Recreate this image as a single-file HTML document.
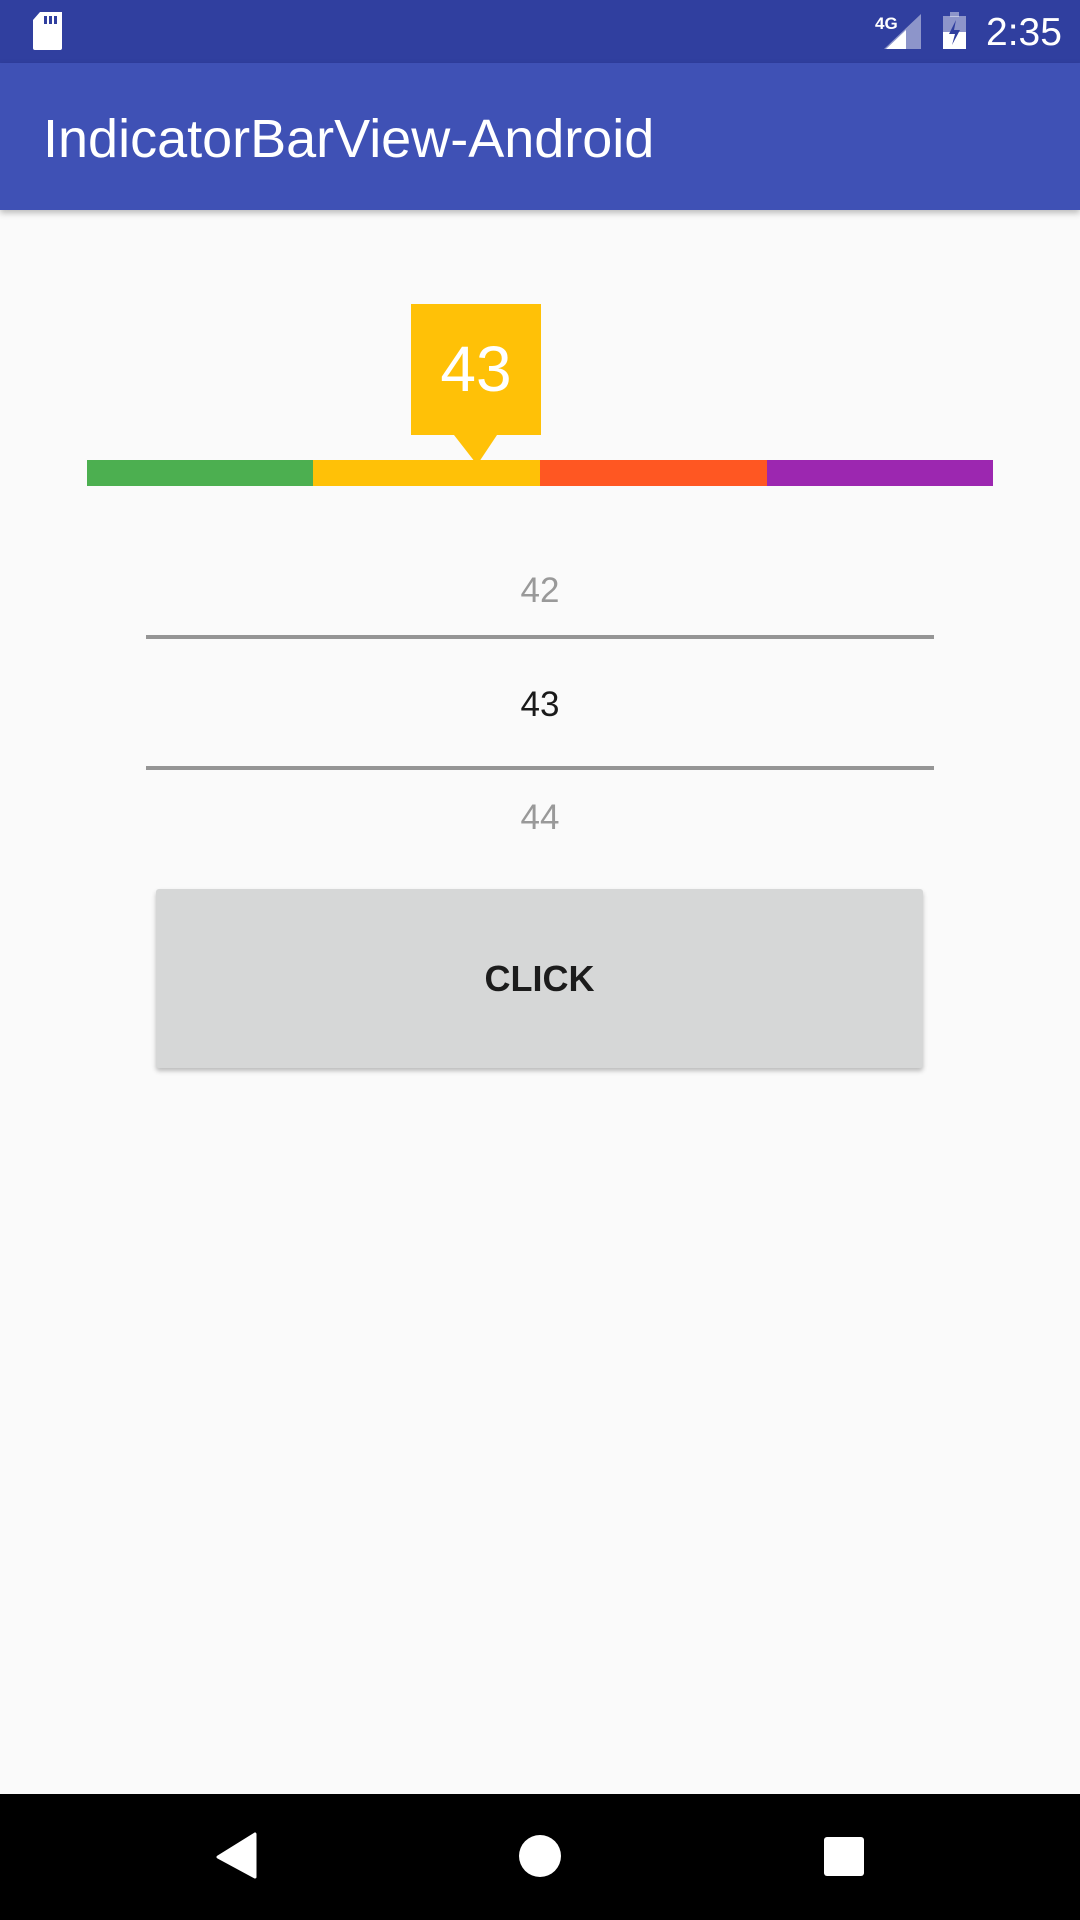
<!DOCTYPE html>
<html><head><meta charset="utf-8"><style>
*{margin:0;padding:0;box-sizing:border-box}
body{width:1080px;height:1920px;background:#FAFAFA;font-family:"Liberation Sans",sans-serif;position:relative;overflow:hidden}
.abs{position:absolute}
</style></head><body>
<div class="abs" style="left:0;top:0;width:1080px;height:63px;background:#303F9F"></div>
<svg class="abs" style="left:0;top:0" width="1080" height="63">
<path d="M40 12 H62 V48 a2 2 0 0 1 -2 2 H35 a2 2 0 0 1 -2 -2 V20 Z" fill="#fff"/>
<rect x="44" y="16" width="3" height="8" fill="#303F9F"/><rect x="49" y="16" width="3" height="8" fill="#303F9F"/><rect x="54" y="16" width="3" height="8" fill="#303F9F"/>
<polygon points="921,14 921,49 884,49" fill="#fff" fill-opacity="0.45"/>
<polygon points="906,30 906,49 886,49" fill="#fff"/>
<text x="875" y="29" font-size="17" font-weight="bold" fill="#fff" font-family="Liberation Sans">4G</text>
<rect x="943" y="16" width="23" height="33" fill="#fff" fill-opacity="0.45"/>
<rect x="950" y="12" width="9" height="5" fill="#fff" fill-opacity="0.45"/>
<rect x="943" y="32" width="23" height="17" fill="#fff"/>
<polygon points="956,20 949,34 955,34 952,45 960,30 954,30" fill="#303F9F"/>
<text x="986" y="45" font-size="39" fill="#fff" font-family="Liberation Sans">2:35</text>
</svg>
<div class="abs" style="left:0;top:63px;width:1080px;height:147px;background:#3F51B5;box-shadow:0 3px 6px rgba(0,0,0,0.25)"></div>
<div class="abs" style="left:43px;top:104px;font-size:54px;color:#fff;line-height:70px">IndicatorBarView-Android</div>
<div class="abs" style="left:411px;top:304px;width:130px;height:131px;background:#FFC107;color:#fff;font-size:64px;text-align:center;line-height:131px">43</div>
<svg class="abs" style="left:0;top:430px" width="1080" height="40"><polygon points="454,5 497,5 479,32 475,32" fill="#FFC107"/></svg>
<div class="abs" style="left:87px;top:460px;width:227px;height:26px;background:#4CAF50"></div>
<div class="abs" style="left:313px;top:460px;width:227px;height:26px;background:#FFC107"></div>
<div class="abs" style="left:540px;top:460px;width:227px;height:26px;background:#FF5722"></div>
<div class="abs" style="left:767px;top:460px;width:226px;height:26px;background:#9C27B0"></div>
<div class="abs" style="left:0;top:566px;width:1080px;text-align:center;font-size:35px;color:#999;line-height:50px">42</div>
<div class="abs" style="left:146px;top:635px;width:788px;height:4px;background:#959595"></div>
<div class="abs" style="left:0;top:680px;width:1080px;text-align:center;font-size:35px;color:#1a1a1a;line-height:50px">43</div>
<div class="abs" style="left:146px;top:766px;width:788px;height:4px;background:#959595"></div>
<div class="abs" style="left:0;top:793px;width:1080px;text-align:center;font-size:35px;color:#999;line-height:50px">44</div>
<div class="abs" style="left:156px;top:889px;width:767px;height:179px;background:#D6D7D7;border-radius:3px;box-shadow:0 3px 5px rgba(0,0,0,0.25);text-align:center;line-height:179px;font-size:36px;font-weight:bold;color:#1c1c1c">CLICK</div>
<div class="abs" style="left:0;top:1794px;width:1080px;height:126px;background:#000"></div>
<svg class="abs" style="left:0;top:1794px" width="1080" height="126">
<path d="M255 40 V83 L218 63 Z" fill="#fff" stroke="#fff" stroke-width="3" stroke-linejoin="round"/>
<circle cx="540" cy="62" r="21" fill="#fff"/>
<rect x="824" y="43" width="40" height="39" rx="3" fill="#fff"/>
</svg>
</body></html>
